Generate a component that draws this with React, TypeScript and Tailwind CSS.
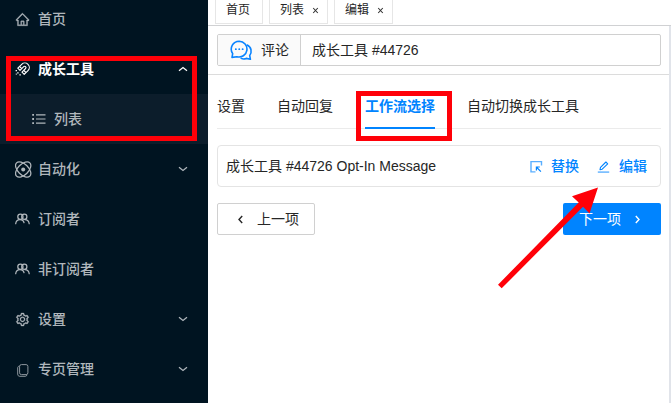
import type { ReactNode } from "react";
import { AiOutlineHome, AiOutlineSetting } from "react-icons/ai";

function MagnetIcon() {
  return (
    <svg width="15" height="15" viewBox="0 0 15 15" fill="none" stroke="currentColor" strokeWidth="1.15">
      <path d="M2.8 6.2 6.7 2.3A4.4 4.4 0 0 1 13 8.6L9.2 12.4 7 10.2 10.6 6.5A1.35 1.35 0 0 0 8.7 4.6L5 8.3Z" strokeLinejoin="round" />
      <path d="M4.6 4.5 6.8 6.6M8.8 8.4l2.1 2.1" />
      <path d="M.6 8.6h1.4M2.2 10.8h1.4M4.4 12.8h1.4M.8 12.2h.9" strokeWidth="1.3" />
    </svg>
  );
}

function ListIcon() {
  return (
    <svg className="ml-px" width="14" height="12" viewBox="0 0 14 12" fill="none" stroke="currentColor">
      <path d="M4 1.8h9.5M4 6h9.5M4 10.2h9.5" strokeWidth="1.2" />
      <path d="M.2 1.8h1.8M.2 6h1.8M.2 10.2h1.8" strokeWidth="1.8" />
    </svg>
  );
}

function AtomIcon() {
  return (
    <svg width="17" height="17" viewBox="0 0 17 17" fill="none" stroke="currentColor" strokeWidth="1.25">
      <ellipse cx="8.2" cy="8.5" rx="9.4" ry="5.3" transform="rotate(45 8.2 8.5)" />
      <ellipse cx="8.2" cy="8.5" rx="9.4" ry="5.3" transform="rotate(-45 8.2 8.5)" />
      <circle cx="8.2" cy="8.5" r="2" fill="currentColor" stroke="none" />
    </svg>
  );
}

function PeopleIcon() {
  return (
    <svg width="15" height="12" viewBox="0 0 15 12" fill="none" stroke="currentColor" strokeWidth="1.25" strokeLinecap="round">
      <circle cx="5.4" cy="3.7" r="2.6" />
      <circle cx="9.3" cy="3.7" r="2.6" />
      <path d="M.7 10.7C.9 8.4 2.5 6.5 5 6.5S8.7 8 9 9.6" />
      <path d="M9.8 6.5c2.5 0 4.2 1.9 4.4 4.2" />
    </svg>
  );
}

function PagesIcon() {
  return (
    <svg width="12" height="13" viewBox="0 0 12 13" fill="none" stroke="currentColor" strokeWidth="1">
      <rect x="2.6" y=".6" width="8.3" height="10" rx="1.8" />
      <path d="M2.5 2.2C1.2 2.2.7 2.9.7 3.9v6.2c0 1.4.8 2.2 2.1 2.2h5.4c1 0 1.6-.5 1.8-1.5" />
    </svg>
  );
}

function CommentsIcon() {
  return (
    <svg width="23" height="21" viewBox="0 0 23 21" fill="none" stroke="currentColor" strokeWidth="1.6" strokeLinejoin="round" strokeLinecap="round">
      <path d="M9.2 1.2a7.9 7.9 0 1 1-2.3 15.5L2 17.4l.7-3.8A7.9 7.9 0 0 1 9.2 1.2Z" />
      <path d="M17.2 5c4.3 2 5 7.2 2.5 10.4l.7 3.9-4.2-.9c-1.8.8-3.5.7-5 0" />
      <path d="M5.8 9.2h.1M9.2 9.2h.1M12.6 9.2h.1" strokeWidth="1.8" />
    </svg>
  );
}

function SelectIcon() {
  return (
    <svg className="mr-2" width="13" height="13" viewBox="0 0 13 13" fill="none" stroke="currentColor">
      <path d="M5.5 11.9H1V1.6h10.5v3.9" strokeWidth="1.4" opacity=".65" />
      <path d="M10.9 11.6 6.8 7.5M6.4 10.4V7h3.4" strokeWidth="1.2" />
    </svg>
  );
}

function EditIcon() {
  return (
    <svg className="mr-[9px]" width="13" height="13" viewBox="0 0 13 13" fill="none" stroke="currentColor">
      <path d="M.8 12.1h11.4" strokeWidth="1.5" opacity=".6" />
      <path d="M3 9.6 3.5 7.4 8.9 2l1.8 1.8L5.2 9.2Z" strokeWidth="1.1" strokeLinejoin="round" />
    </svg>
  );
}

function Chevron({ up }: { up?: boolean }) {
  return (
    <svg width="10" height="6" viewBox="0 0 10 6" fill="none" stroke="currentColor" strokeWidth="1.3">
      <path d={up ? "M1 4.7 5 1.6 9 4.7" : "M1 1.3 5 4.4 9 1.3"} />
    </svg>
  );
}

type MenuRowProps = {
  icon: ReactNode;
  label: string;
  arrow?: "up" | "down";
  active?: boolean;
  sub?: boolean;
};

function MenuRow({ icon, label, arrow, active, sub }: MenuRowProps) {
  const tone = active ? "font-bold text-white" : "font-medium text-[#b0b7bc]";
  const place = sub ? "bg-[#0c1d2b] pl-[31px]" : "pl-[15px]";
  return (
    <div className={`flex h-[50px] shrink-0 items-center pr-5 ${place} ${tone}`}>
      <span className="flex w-[23px] shrink-0 items-center">{icon}</span>
      <span className="flex-1 whitespace-nowrap">{label}</span>
      {arrow && <Chevron up={arrow === "up"} />}
    </div>
  );
}

function PageTab({ label, closable }: { label: string; closable?: boolean }) {
  return (
    <div className={`flex h-6 items-center border border-t-0 border-[#e6e6e6] pb-[3px] pl-2.5 text-[12px] text-[#262626] ${closable ? "w-[59px]" : "w-12"}`}>
      <span>{label}</span>
      {closable && (
        <svg className="ml-2" width="7" height="7" viewBox="0 0 7 7" stroke="#333" strokeWidth="1.1">
          <path d="M1.2 1l4.6 5M5.8 1L1.2 6" />
        </svg>
      )}
    </div>
  );
}

export default function App() {
  return (
    <div className="relative flex h-[403px] w-[671px] overflow-hidden bg-white font-['Liberation_Sans','Noto_Sans_CJK_SC',sans-serif] text-[14px] leading-5 text-[#262626]">
      <aside className="flex w-52 shrink-0 flex-col overflow-hidden bg-[#001421]">
        <div className="-mt-1.5" />
        <MenuRow icon={<AiOutlineHome size={15} strokeWidth={20} />} label="首页" />
        <MenuRow icon={<MagnetIcon />} label="成长工具" arrow="up" active />
        <MenuRow icon={<ListIcon />} label="列表" sub />
        <MenuRow icon={<AtomIcon />} label="自动化" arrow="down" />
        <MenuRow icon={<PeopleIcon />} label="订阅者" />
        <MenuRow icon={<PeopleIcon />} label="非订阅者" />
        <MenuRow icon={<AiOutlineSetting size={15} strokeWidth={20} />} label="设置" arrow="down" />
        <MenuRow icon={<span className="pl-0.5 pt-0.5 opacity-80"><PagesIcon /></span>} label="专页管理" arrow="down" />
      </aside>

      <main className="flex min-w-0 flex-1 flex-col">
        <nav className="flex h-[26px] shrink-0 gap-1.5 border-b border-[#d0d1d3] pl-[7px]">
          <PageTab label="首页" />
          <PageTab label="列表" closable />
          <PageTab label="编辑" closable />
        </nav>

        <div className="flex flex-1 flex-col border-r-2 border-[#e1e4ea]">
          <header className="h-[49px] shrink-0 border-b border-[#dcdcdc] pl-[9px] pr-2 pt-2">
            <div className="flex h-8 overflow-hidden rounded-xs border border-[#d0d0d0]">
              <div className="flex w-[83px] items-center border-r border-[#d0d0d0] bg-[#fafafa] pl-3">
                <span className="flex w-[31px] text-[#0a84ff]"><CommentsIcon /></span>
                <span>评论</span>
              </div>
              <div className="flex items-center pl-[11px]">成长工具 #44726</div>
            </div>
          </header>

          <section className="flex flex-col pl-[9px] pr-2">
            <div className="flex h-[54px] gap-8 border-b border-[#ebebeb] pt-[21px]">
              <span>设置</span>
              <span>自动回复</span>
              <span className="h-[33px] border-b-2 border-[#0084ff] font-bold text-[#0084ff]">工作流选择</span>
              <span>自动切换成长工具</span>
            </div>

            <div className="mt-4 flex h-[42px] items-center rounded border border-[#e4e4e4] pl-2 pr-[13px]">
              <span className="flex-1">成长工具 #44726 Opt-In Message</span>
              <span className="flex items-center font-medium text-[#0084ff]">
                <SelectIcon />
                替换
              </span>
              <span className="ml-[18px] flex items-center font-medium text-[#0084ff]">
                <EditIcon />
                编辑
              </span>
            </div>

            <div className="mt-4 flex justify-between">
              <button className="flex h-8 w-[98px] items-center rounded-xs border border-[#d0d0d0] pl-[19px]">
                <svg className="mr-[13px]" width="7" height="9" viewBox="0 0 7 9" fill="none" stroke="currentColor" strokeWidth="1.4">
                  <path d="M5.2 1 2 4.5 5.2 8" />
                </svg>
                上一项
              </button>
              <button className="flex h-8 w-[98px] items-center rounded-xs bg-[#0084ff] pl-4 text-white">
                下一项
                <svg className="ml-[13px]" width="7" height="9" viewBox="0 0 7 9" fill="none" stroke="currentColor" strokeWidth="1.4">
                  <path d="M1.8 1 5 4.5 1.8 8" />
                </svg>
              </button>
            </div>
          </section>
        </div>
      </main>

      <div className="absolute left-1.5 top-14 h-[85px] w-[191px] border-[5px] border-[#ff0008]" />
      <div className="absolute left-[356px] top-[91px] h-[50px] w-24 border-[5px] border-[#ff0008]" />
      <svg className="absolute left-[490px] top-[180px]" width="120" height="115" viewBox="490 180 120 115" fill="#ff0008">
        <path d="M598 187.5 572 196.3 578.7 202.5 498 284.8 501.7 288.2 583 206.7 589.5 213.5Z" />
      </svg>
    </div>
  );
}
